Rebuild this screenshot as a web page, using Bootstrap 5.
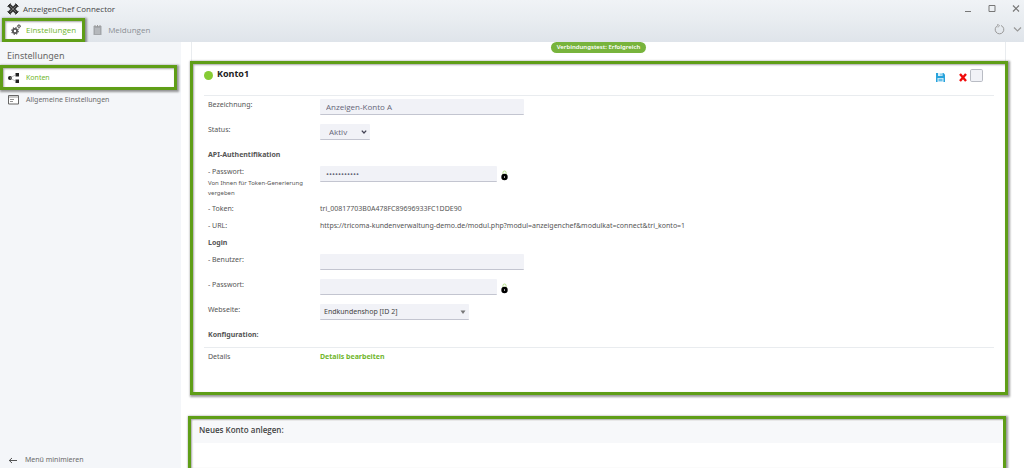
<!DOCTYPE html>
<html lang="de">
<head>
<meta charset="utf-8">
<meta name="viewport" content="width=device-width, initial-scale=1">
<title>AnzeigenChef Connector</title>
<link href="https://cdn.jsdelivr.net/npm/bootstrap@5.3.0/dist/css/bootstrap.min.css" rel="stylesheet">
<style>
  body { font-family: "Noto Sans", "Open Sans", sans-serif; font-size: 7px; line-height: 12px; color: #555; background: #fff; }
  svg { display: block; flex: none; }
  .app-head { background: linear-gradient(#f0f3f6, #e9edf1 45%, #dfe4ea); font-family: "Open Sans", sans-serif; font-size: 8px; }
  .title-bar { height: 17px; color: #444; padding: 0 4px 0 7px; }
  .tab-bar { height: 25px; padding: 0 2px; }
  .win-btn { border: 0; background: none; padding: 0; color: #777; }
  .marked { border: 3px solid #5f9e17; box-shadow: 1px 1px 2px 1px rgba(0,0,0,.4), inset 1px 1px 2px rgba(0,0,0,.35); background: #fff; }
  .tab-link { height: 24px; color: #8a8f94; gap: 6px; padding: 0 8px; text-decoration: none; }
  .tab-link.marked { gap: 5px; padding: 0 6px; }
  .green, .green:hover { color: #70b62c; }
  .side { width: 181px; background: #f4f6f9; }
  .side-title { font-size: 9px; line-height: 14px; color: #666; padding: 7px 7px 2px; }
  .side-link { height: 20px; gap: 7px; padding: 0 8px; color: #6b6b6b; text-decoration: none; }
  .side-link.marked { height: 25px; padding: 0 5px; color: #70b62c; width: 177px; }
  .side-link.collapse-link { height: 16px; }
  .content-area { padding: 0 16px 0 7px; min-width: 0; }
  .status-strip { height: 19px; margin: 0 2px 0 3px; border: solid #e9ecef; border-width: 0 1px; }
  .status-pill { background: #78b43c; font-size: 6px; line-height: 11px; padding: 0 6px; font-weight: 600; }
  .konto { min-height: 334px; margin: 0 0 0 2px; padding: 0 11px; }
  .konto-head { height: 32px; border-bottom: 1px solid #e9ecef; padding: 0 11px 9px 0; }
  .konto-title { font-size: 9px; line-height: 14px; color: #222; margin: 0; padding-bottom: 3px; font-weight: 700; }
  .head-tools { gap: 14px; margin: 4px 3px 0 0; }
  .dot { width: 9px; height: 9px; background: #86cb34; }
  .pick { width: 13px; height: 13px; border-color: #b9bcc4; background-color: #f1f2f7; margin: 0; border-radius: 2px; }
  .form-rows { padding: 3px 4px 0; }
  .line { display: flex; min-height: 17px; }
  .line.tall { min-height: 25px; }
  .line.note { min-height: 37px; }
  .line.last { min-height: 18px; }
  .key { width: 112px; flex: none; }
  .key small { display: block; font-size: 6px; line-height: 10px; }
  .section { font-weight: 700; color: #555; margin: 0; font-size: 7px; line-height: 12px; }
  .field { height: 16px; min-height: 0; font-family: "Open Sans", sans-serif; font-size: 8px; line-height: 12px; padding: 1px 6px; border: 0; border-bottom: 1px solid #c3c5d0; border-radius: 1px; background-color: #f1f2f7; color: #667; }
  .field:focus { background-color: #f1f2f7; }
  .w-field { width: 204px; } .w-pass { width: 177px; } .w-state { width: 50px; } .w-site { width: 149px; }
  select.field { background-position: right 3px center; background-size: 6px 6px; padding-right: 12px; }
  .w-state { padding-left: 9px; background-image: url("data:image/svg+xml,%3Csvg xmlns='http://www.w3.org/2000/svg' viewBox='0 0 6 6'%3E%3Cpath d='M.8 1.6 3 4l2.200-2.400' fill='none' stroke='%23445' stroke-width='1.300'/%3E%3C/svg%3E"); }
  .w-site { padding-left: 4px; color: #444; font-family: "Noto Sans", sans-serif; font-size: 7px; background-image: url("data:image/svg+xml,%3Csvg xmlns='http://www.w3.org/2000/svg' viewBox='0 0 6 6'%3E%3Cpath d='M.5 1.500h5L3 5z' fill='%23777'/%3E%3C/svg%3E"); }
  .konto-foot { border-top: 1px solid #e9ecef; padding: 3px 4px 0; }
  .link-strong { font-weight: 700; text-decoration: none; }
  .neu { margin: 21px 2px 0 0; border-bottom: 0; }
  .neu-head { background: #f7f8fa; margin: 2px 1px 0 2px; padding: 3px 6px 7px; font-family: "Open Sans", sans-serif; font-weight: 600; color: #444; font-size: 8px; line-height: 12px; }
</style>
</head>
<body>
<svg width="0" height="0" class="position-absolute" aria-hidden="true">
  <symbol id="lock" viewBox="0 0 7 11"><path d="M2 5V2.500a1.500 1.500 0 0 1 3 0V5" fill="none" stroke="#b5dd88"/><circle cx="3.500" cy="7" r="3.200" fill="#000"/><path d="M3.500 6.300v1.500" stroke="#ddd"/></symbol>
</svg>
<div class="d-flex flex-column vh-100 overflow-hidden">
  <header class="app-head">
    <div class="title-bar d-flex align-items-center">
      <svg width="12" height="12" viewBox="0 0 12 12"><path d="M2 2l8 8M10 2l-8 8" stroke="#333" stroke-width="3.600"/><path d="M.5 3.500l3-3M8.500.5l3 3M.5 8.500l3 3M8.500 11.500l3-3" stroke="#333"/><path d="M3 3l6 6M9 3l-6 6" stroke="#888" stroke-width=".7"/></svg>
      <span class="ms-1">AnzeigenChef Connector</span>
      <div class="ms-auto d-flex gap-3">
        <button class="win-btn" aria-label="Minimieren"><svg width="8" height="8" viewBox="0 0 8 8"><path d="M1 6.500h6" stroke="currentColor"/></svg></button>
        <button class="win-btn" aria-label="Maximieren"><svg width="8" height="8" viewBox="0 0 8 8"><path d="M1 .5h6v6H1z" fill="none" stroke="currentColor"/></svg></button>
        <button class="win-btn" aria-label="Schließen"><svg width="8" height="8" viewBox="0 0 8 8"><path d="M1 .5l6 6M7 .5l-6 6" stroke="currentColor" stroke-width="1.200"/></svg></button>
      </div>
    </div>
    <nav class="tab-bar d-flex align-items-center">
      <a href="#" class="tab-link marked green d-flex align-items-center"><svg width="10" height="11" viewBox="0 0 10 11"><circle cx="4" cy="7" r="2.100" fill="none" stroke="#555" stroke-width="1.800"/><circle cx="4" cy="7" r="3.300" fill="none" stroke="#555" stroke-width="1.200" stroke-dasharray="1.300 1.290"/><circle cx="8" cy="2.300" r="1.100" fill="none" stroke="#555"/><circle cx="8" cy="2.300" r="1.700" fill="none" stroke="#555" stroke-dasharray=".7 .63"/></svg>Einstellungen</a>
      <a href="#" class="tab-link d-flex align-items-center"><svg width="9" height="10" viewBox="0 0 9 10"><path d="M.5 1h8v9h-8z" fill="#a3a6aa"/><path d="M2 0v2M4.500 0v2M7 0v2" stroke="#999"/><path d="M2 4h5M2 6h5M2 8h5" stroke="#d0d4d8" stroke-width=".8"/></svg>Meldungen</a>
      <div class="ms-auto d-flex align-items-center gap-2">
        <button class="win-btn" aria-label="Aktualisieren"><svg width="11" height="11" viewBox="0 0 11 11"><path d="M7 1.500A4.300 4.300 0 1 1 4 1.500" fill="none" stroke="#999"/><path d="M3 0l2.500 1.500L4 3.500" fill="none" stroke="#999" stroke-width=".8"/></svg></button>
        <button class="win-btn" aria-label="Mehr"><svg width="9" height="9" viewBox="0 0 9 9"><path d="M1 2.500l3.500 3.500L8 2.500" fill="none" stroke="#999" stroke-width="1.200"/></svg></button>
      </div>
    </nav>
  </header>
  <div class="d-flex flex-grow-1">
    <aside class="side d-flex flex-column flex-shrink-0">
      <h2 class="side-title fw-normal m-0">Einstellungen</h2>
      <a href="#" class="side-link marked d-flex align-items-center"><svg width="11" height="10" viewBox="0 0 11 10"><circle cx="2" cy="5" r="2" fill="#222"/><path d="M7.500 0h3.500v3.500H7.500zM7.500 6.500h3.500V10H7.500z" fill="#222"/><path d="M2 5l6-3.500M2 5l6 3.500" stroke="#999" stroke-width=".6"/></svg>Konten</a>
      <a href="#" class="side-link d-flex align-items-center"><svg width="11" height="10" viewBox="0 0 11 10"><path d="M.5.5h10v8.500H.5z" fill="#fff" stroke="#666"/><path d="M1 2h9" stroke="#999"/><path d="M2 4.500h4M2 6.500h3" stroke="#777" stroke-width=".8"/></svg>Allgemeine Einstellungen</a>
      <a href="#" class="side-link collapse-link mt-auto d-flex align-items-center"><svg width="10" height="9" viewBox="0 0 10 9"><path d="M1 4.500h8M4 2L1.300 4.500 4 7" fill="none" stroke="#555"/></svg>Menü minimieren</a>
    </aside>
    <main class="content-area flex-grow-1 d-flex flex-column">
      <div class="status-strip d-flex justify-content-center align-items-start"><span class="badge rounded-pill status-pill">Verbindungstest: Erfolgreich</span></div>
      <section class="konto marked">
        <div class="konto-head d-flex align-items-center">
          <span class="dot rounded-circle"></span>
          <h1 class="konto-title ms-1 flex-grow-1">Konto1</h1>
          <div class="head-tools d-flex">
            <button class="win-btn" aria-label="Speichern"><svg width="9" height="9" viewBox="0 0 9 9"><path d="M0 0h7.500L9 1.500V9H0z" fill="#28a3dc"/><path d="M2 0h4.500v3H2zM1.500 5h6v4h-6z" fill="#d9f0fb"/><path d="M5 .5v2M2.500 6.300h4M2.500 7.700h4" stroke="#28a3dc" stroke-width=".8"/></svg></button>
            <button class="win-btn" aria-label="Löschen"><svg width="8" height="9" viewBox="0 0 8 9"><path d="M1 1l6 7M7 1L1 8" stroke="#f00b0b" stroke-width="2.400"/></svg></button>
          </div>
          <input type="checkbox" class="form-check-input pick" aria-label="Konto1 auswählen">
        </div>
        <form class="form-rows">
          <div class="line tall"><label class="key" for="name">Bezeichnung:</label><input id="name" class="form-control field w-field" value="Anzeigen-Konto A"></div>
          <div class="line tall"><label class="key" for="state">Status:</label><select id="state" class="form-select field w-state"><option>Aktiv</option></select></div>
          <div class="line"><h3 class="section">API-Authentifikation</h3></div>
          <div class="line note"><label class="key" for="apipw">- Passwort:<small>Von Ihnen für Token-Generierung vergeben</small></label><input id="apipw" type="password" class="form-control field w-pass" value="geheim12345"><svg class="ms-1 mt-1" width="7" height="11"><use href="#lock"/></svg></div>
          <div class="line"><span class="key">- Token:</span><span>tri_00817703B0A478FC89696933FC1DDE90</span></div>
          <div class="line"><span class="key">- URL:</span><span>https://tricoma-kundenverwaltung-demo.de/modul.php?modul=anzeigenchef&amp;modulkat=connect&amp;tri_konto=1</span></div>
          <div class="line"><h3 class="section">Login</h3></div>
          <div class="line tall"><label class="key" for="user">- Benutzer:</label><input id="user" class="form-control field w-field"></div>
          <div class="line tall"><label class="key" for="pw">- Passwort:</label><input id="pw" type="password" class="form-control field w-pass"><svg class="ms-1 mt-1" width="7" height="11"><use href="#lock"/></svg></div>
          <div class="line tall"><label class="key" for="site">Webseite:</label><select id="site" class="form-select field w-site"><option>Endkundenshop [ID 2]</option></select></div>
          <div class="line last"><h3 class="section">Konfiguration:</h3></div>
        </form>
        <div class="konto-foot d-flex"><span class="key">Details</span><a href="#" class="green link-strong">Details bearbeiten</a></div>
      </section>
      <section class="neu marked flex-grow-1"><h2 class="neu-head">Neues Konto anlegen:</h2></section>
    </main>
  </div>
</div>
<script src="https://cdn.jsdelivr.net/npm/bootstrap@5.3.0/dist/js/bootstrap.bundle.min.js"></script>
</body>
</html>
